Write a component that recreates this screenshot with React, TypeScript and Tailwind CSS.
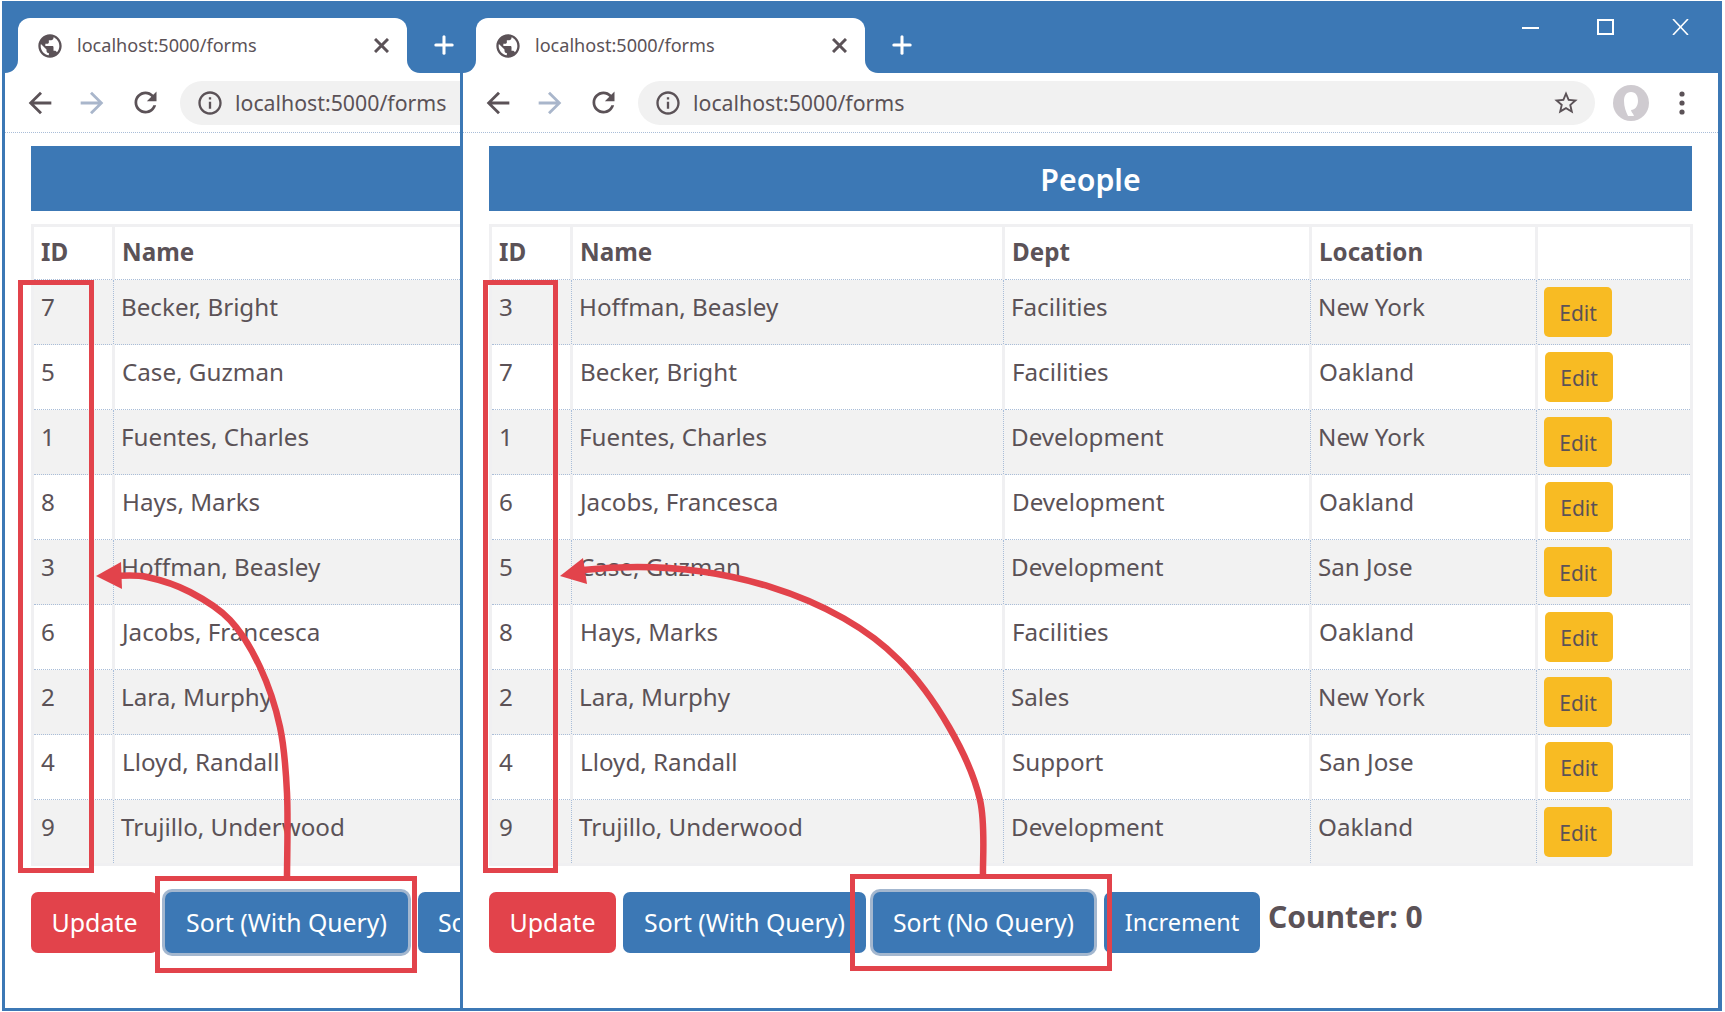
import { Plus } from "lucide-react";

type Person = { id: number; name: string; dept: string; location: string };

const people: Person[] = [
    { id: 3, name: "Hoffman, Beasley", dept: "Facilities", location: "New York" },
    { id: 7, name: "Becker, Bright", dept: "Facilities", location: "Oakland" },
    { id: 1, name: "Fuentes, Charles", dept: "Development", location: "New York" },
    { id: 6, name: "Jacobs, Francesca", dept: "Development", location: "Oakland" },
    { id: 5, name: "Case, Guzman", dept: "Development", location: "San Jose" },
    { id: 8, name: "Hays, Marks", dept: "Facilities", location: "Oakland" },
    { id: 2, name: "Lara, Murphy", dept: "Sales", location: "New York" },
    { id: 4, name: "Lloyd, Randall", dept: "Support", location: "San Jose" },
    { id: 9, name: "Trujillo, Underwood", dept: "Development", location: "Oakland" },
];

const sortedOrder = [7, 5, 1, 8, 3, 6, 2, 4, 9];
const sortedPeople = sortedOrder.map((id) => people.find((p) => p.id === id)!);

const Icon = ({ d, className }: { d: string; className: string }) => (
    <svg viewBox="0 0 24 24" className={className} fill="currentColor">
        <path d={d} />
    </svg>
);

const ICON_BACK = "M20 11H7.83l5.59-5.59L12 4l-8 8 8 8 1.41-1.41L7.83 13H20v-2z";
const ICON_FORWARD = "M4 11h12.17l-5.59-5.59L12 4l8 8-8 8-1.41-1.41L16.17 13H4v-2z";
const ICON_RELOAD =
    "M17.65 6.35C16.2 4.9 14.21 4 12 4c-4.42 0-7.99 3.58-7.99 8s3.57 8 7.99 8c3.73 0 6.84-2.55 7.73-6h-2.08c-.82 2.33-3.04 4-5.65 4-3.31 0-6-2.69-6-6s2.69-6 6-6c1.66 0 3.14.69 4.22 1.78L13 11h7V4l-2.35 2.35z";
const ICON_INFO =
    "M11 7h2v2h-2zm0 4h2v6h-2zm1-9C6.48 2 2 6.48 2 12s4.48 10 10 10 10-4.48 10-10S17.52 2 12 2zm0 18c-4.41 0-8-3.59-8-8s3.59-8 8-8 8 3.59 8 8-3.59 8-8 8z";
const ICON_GLOBE =
    "M12 2C6.48 2 2 6.48 2 12s4.48 10 10 10 10-4.48 10-10S17.52 2 12 2zm-1 17.93c-3.95-.49-7-3.85-7-7.93 0-.62.08-1.21.21-1.79L9 15v1c0 1.1.9 2 2 2v1.93zm6.9-2.54c-.26-.81-1-1.39-1.9-1.39h-1v-3c0-.55-.45-1-1-1H8v-2h2c.55 0 1-.45 1-1V7h2c1.1 0 2-.9 2-2v-.41c2.93 1.19 5 4.06 5 7.41 0 2.08-.8 3.97-2.1 5.39z";
const ICON_STAR =
    "M22 9.24l-7.19-.62L12 2 9.19 8.63 2 9.24l5.46 4.73L5.82 21 12 17.27 18.18 21l-1.63-7.03L22 9.24zM12 15.4l-3.76 2.27 1-4.28-3.32-2.88 4.38-.38L12 6.1l1.71 4.04 4.38.38-3.32 2.88 1 4.28L12 15.4z";

const Tab = () => (
    <div className="relative mt-[17px] flex h-[55px] w-[389px] items-center rounded-t-[12px] bg-white pl-[20px] pr-[18px] text-[#5b5257]">
        <span className="absolute -left-[13px] bottom-0 h-[13px] w-[13px] bg-white">
            <span className="block h-full w-full rounded-br-[13px] bg-[#3c78b5]" />
        </span>
        <span className="absolute -right-[13px] bottom-0 h-[13px] w-[13px] bg-white">
            <span className="block h-full w-full rounded-bl-[13px] bg-[#3c78b5]" />
        </span>
        <Icon d={ICON_GLOBE} className="h-[28px] w-[28px] -ml-[2px]" />
        <span className="ml-[13px] text-[18.1px]">localhost:5000/forms</span>
        <svg viewBox="0 0 15 15" className="ml-auto h-[15px] w-[15px]" stroke="currentColor" strokeWidth="3">
            <path d="M1 1l13 13M14 1L1 14" />
        </svg>
    </div>
);

const WindowControls = () => (
    <div className="ml-auto mr-[29px] mt-[18px] flex gap-[58px] text-white">
        <svg viewBox="0 0 17 16" className="h-[16px] w-[17px]" stroke="currentColor" strokeWidth="2">
            <path d="M0 9h17" />
        </svg>
        <svg viewBox="0 0 17 16" className="h-[16px] w-[17px]" fill="none" stroke="currentColor" strokeWidth="2">
            <rect x="1" y="1" width="15" height="14" />
        </svg>
        <svg viewBox="0 0 17 16" className="h-[16px] w-[17px]" stroke="currentColor" strokeWidth="1.6">
            <path d="M1 0l15 16M16 0L1 16" />
        </svg>
    </div>
);

const Toolbar = () => (
    <div className="flex h-[60px] items-center border-b border-dotted border-[#a9bdd8] pl-[18px] text-[#5b5257]">
        <Icon d={ICON_BACK} className="h-[34px] w-[34px]" />
        <Icon d={ICON_FORWARD} className="ml-[18px] h-[34px] w-[34px] text-[#a9b6cb]" />
        <Icon d={ICON_RELOAD} className="ml-[20px] h-[33px] w-[33px]" />
        <div className="ml-[18px] flex h-[44px] w-[957px] items-center rounded-full bg-[#f1f1f1] pl-[16px] pr-[15px]">
            <Icon d={ICON_INFO} className="h-[28px] w-[28px]" />
            <span className="ml-[11px] text-[21.3px]">localhost:5000/forms</span>
            <Icon d={ICON_STAR} className="ml-auto h-[28px] w-[28px]" />
        </div>
        <svg viewBox="0 0 36 36" className="ml-[18px] h-[36px] w-[36px]">
            <circle cx="18" cy="18" r="18" fill="#cfcbd0" />
            <path d="M18 7c-5 0-7 4-7 9 0 6 2 11 4 15h6c-1-3-3-4-3-6 4 0 7-4 7-9s-2-9-7-9z" fill="#fff" />
        </svg>
        <svg viewBox="0 0 6 24" className="ml-[30px] h-[24px] w-[6px]" fill="currentColor">
            <circle cx="3" cy="3" r="2.6" />
            <circle cx="3" cy="12" r="2.6" />
            <circle cx="3" cy="21" r="2.6" />
        </svg>
    </div>
);

const PeopleTable = ({ rows }: { rows: Person[] }) => (
    <table className="mt-[13px] w-[1201px] table-fixed border-collapse border-[3px] border-[#f0f0f2] text-[24.2px] text-[#5b5257]">
        <colgroup>
            <col className="w-[81px]" />
            <col className="w-[432px]" />
            <col className="w-[307px]" />
            <col className="w-[226px]" />
            <col className="w-[155px]" />
        </colgroup>
        <thead>
            <tr className="h-[54px] text-left">
                {["ID", "Name", "Dept", "Location", ""].map((h, i) => (
                    <th key={i} className="border-x-[3px] border-[#f0f0f2] px-[7px] pb-[2px] font-bold">
                        {h}
                    </th>
                ))}
            </tr>
        </thead>
        <tbody>
            {rows.map((p, i) => {
                const cell =
                    i % 2 === 0
                        ? "border border-dotted border-[#a9bdd8] px-[7px] pt-[9px] align-top"
                        : "border-x-[3px] border-[#f0f0f2] px-[7px] pt-[9px] align-top";
                return (
                    <tr key={p.id} className={i % 2 === 0 ? "h-[65px] bg-[#f2f2f2]" : "h-[65px] bg-white"}>
                        <td className={cell}>{p.id}</td>
                        <td className={cell}>{p.name}</td>
                        <td className={cell}>{p.dept}</td>
                        <td className={cell}>{p.location}</td>
                        <td className={cell}>
                            <button className="-mt-[2px] flex h-[50px] w-[68px] items-center justify-center rounded-[5px] bg-[#f8bb23] pt-[3px] text-[21px] text-[#5b5257]">
                                Edit
                            </button>
                        </td>
                    </tr>
                );
            })}
        </tbody>
    </table>
);

const ActionButton = ({ label, className, active }: { label: string; className: string; active?: boolean }) => (
    <button
        className={
            active
                ? `mr-[3px] h-[61px] shrink-0 rounded-[7px] bg-[#3c78b5] pt-[1px] text-white ring-[3px] ring-[#a3b7cf] ${className}`
                : `h-[61px] shrink-0 rounded-[7px] bg-[#3c78b5] pt-[1px] text-white ${className}`
        }
    >
        {label}
    </button>
);

const BrowserWindow = ({ rows, active, controls }: { rows: Person[]; active: string; controls?: boolean }) => (
    <div className="w-[1255px] shrink-0">
        <div className="flex h-[72px] bg-[#3c78b5] pl-[13px]">
            <Tab />
            <Plus className="ml-[23px] mt-[30px] h-[28px] w-[28px] text-white" strokeWidth={2.6} />
            {controls && <WindowControls />}
        </div>
        <Toolbar />
        <div className="pl-[26px]">
            <div className="mt-[13px] flex h-[65px] w-[1203px] items-center justify-center bg-[#3c78b5] pt-[3px] text-[30.3px] font-semibold text-white">
                People
            </div>
            <PeopleTable rows={rows} />
            <div className="mt-[26px] flex items-start gap-[7px]">
                <button className="h-[61px] w-[127px] shrink-0 rounded-[7px] bg-[#e2434b] pt-[1px] text-[25px] text-white">
                    Update
                </button>
                <ActionButton label="Sort (With Query)" className="w-[243px] text-[24.8px]" active={active === "query"} />
                <ActionButton label="Sort (No Query)" className="w-[221px] text-[24.8px]" active={active === "noquery"} />
                <ActionButton label="Increment" className="w-[156px] text-[23.5px]" />
                <span className="ml-[1px] text-[30px] font-bold leading-[49px] text-[#5b5257]">Counter: 0</span>
            </div>
        </div>
    </div>
);

const App = () => {
    return (
        <div className="relative flex h-[1012px] w-[1725px] bg-white pb-px pl-[2px] pt-px font-['Noto_Sans',sans-serif]">
            <div className="h-[1010px] w-[458px] shrink-0 overflow-hidden border-b-[3px] border-l-[3px] border-[#3c78b5]">
                <BrowserWindow rows={sortedPeople} active="query" />
            </div>
            <div className="h-[1010px] w-[1262px] shrink-0 overflow-hidden border-x-[3px] border-b-[3px] border-r-4 border-[#3c78b5]">
                <BrowserWindow rows={people} active="noquery" controls />
            </div>

            {/* red annotation boxes and arrows */}
            <div className="absolute left-[18px] top-[280px] h-[593px] w-[76px] border-[5px] border-[#e2434b]" />
            <div className="absolute left-[483px] top-[280px] h-[593px] w-[75px] border-[5px] border-[#e2434b]" />
            <div className="absolute left-[155px] top-[876px] h-[97px] w-[262px] border-[5px] border-[#e2434b]" />
            <div className="absolute left-[850px] top-[874px] h-[97px] w-[262px] border-[5px] border-[#e2434b]" />
            <svg className="pointer-events-none absolute left-0 top-0 h-[1012px] w-[1725px]" viewBox="0 0 1725 1012" fill="none">
                <path
                    d="M287 877C287 863 288.2 818 287 793C285.8 768 284.5 748 280 727C275.5 706 268.3 684.8 260 667C251.7 649.2 241.7 632.5 230 620C218.3 607.5 203.8 599.2 190 592C176.2 584.8 159.5 579.7 147 577C134.5 574.3 120 576 115 576"
                    stroke="#e2434b"
                    strokeWidth="6.5"
                />
                <path d="M96 576L121 562L122 589Z" fill="#e2434b" />
                <path
                    d="M983 875C982.5 862.5 985.7 824.7 980 800C974.3 775.3 962.5 750.3 949 727C935.5 703.7 920 680.7 899 660C840 600 720 555 583 570"
                    stroke="#e2434b"
                    strokeWidth="6.5"
                />
                <path d="M560 576L583 558L587 584Z" fill="#e2434b" />
            </svg>
        </div>
    );
};

export default App;
